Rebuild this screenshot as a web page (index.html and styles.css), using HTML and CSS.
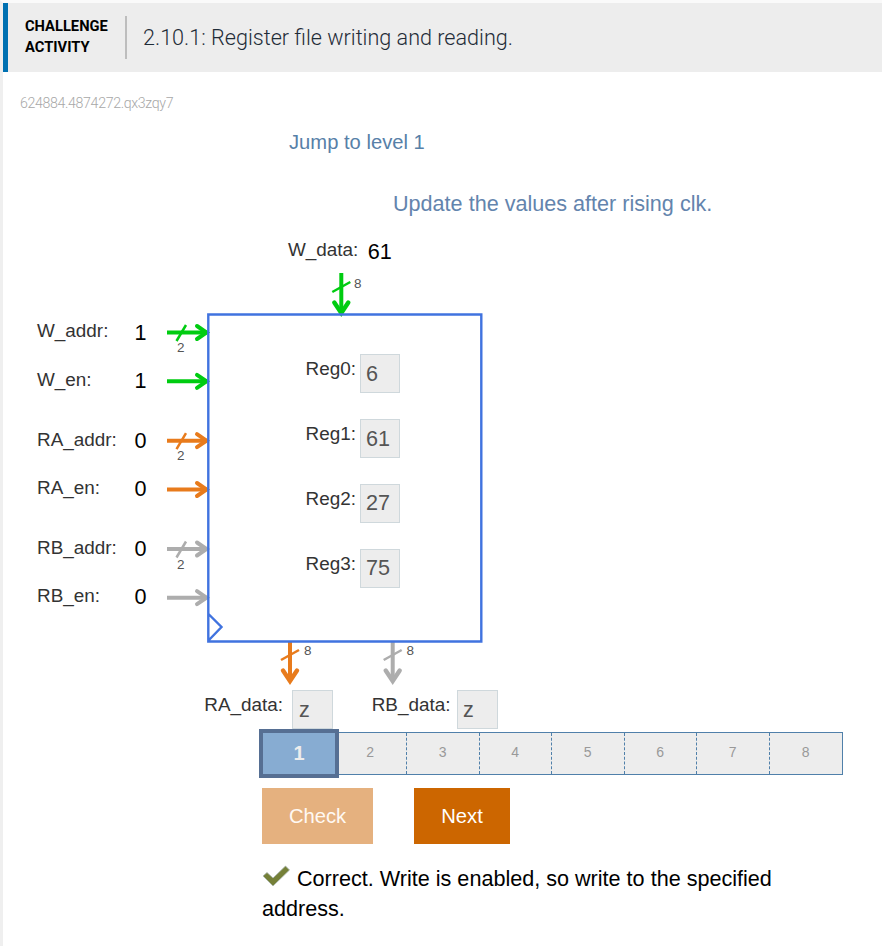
FILE: index.html
```html
<!DOCTYPE html>
<html lang="en">
<head>
<meta charset="utf-8">
<title>Register file writing and reading</title>
<link rel="stylesheet" href="styles.css">
</head>
<body>
<section class="activity">
  <header class="activity-header">
    <div class="activity-type">CHALLENGE<br>ACTIVITY</div>
    <h1 class="activity-title">2.10.1: Register file writing and reading.</h1>
  </header>
  <div class="activity-id">624884.4874272.qx3zqy7</div>
  <a class="jump">Jump to level 1</a>
  <p class="instruction">Update the values after rising clk.</p>

  <div class="diagram">
    <svg class="drawing" width="520" height="500" viewBox="0 230 520 500">
      <defs>
        <g id="arrow">
          <path d="M167 0H207" stroke-width="4"/>
          <path d="M197 -6.5L206.5 0L197 6.5" stroke-width="4" stroke-linecap="round"/>
        </g>
        <path id="slash" d="M176.5 8.5L186 -7.5" stroke-width="2.5"/>
        <g id="down">
          <path d="M0 0V39" stroke-width="4"/>
          <path d="M-7 29.5L0 40L7 29.5" stroke-width="4.4" stroke-linecap="round"/>
          <path d="M-9 19L9 9" stroke-width="2.5"/>
        </g>
      </defs>
      <g class="write"><use href="#arrow" y="332.5"/><use href="#slash" y="332.5"/><use href="#arrow" y="381.3"/><use href="#down" x="341.3" y="273"/></g>
      <g class="read-a"><use href="#arrow" y="440.7"/><use href="#slash" y="440.7"/><use href="#arrow" y="489.5"/><use href="#down" x="290" y="641"/></g>
      <g class="read-b"><use href="#arrow" y="549"/><use href="#slash" y="549"/><use href="#arrow" y="597.7"/><use href="#down" x="392.7" y="641"/></g>
      <path class="outline" d="M208.3 314.5H481.3V641.5H208.3ZM208.5 614L221.5 627L208.5 640.5"/>
      <g class="labels">
        <text x="37" y="337">W_addr:</text>
        <text x="37" y="386">W_en:</text>
        <text x="37" y="445.6">RA_addr:</text>
        <text x="37" y="494.2">RA_en:</text>
        <text x="37" y="553.6">RB_addr:</text>
        <text x="37" y="602">RB_en:</text>
        <text x="288" y="256">W_data:</text>
        <text x="305.5" y="375">Reg0:</text>
        <text x="305.5" y="440">Reg1:</text>
        <text x="305.5" y="505">Reg2:</text>
        <text x="305.5" y="570">Reg3:</text>
        <text x="204.3" y="711">RA_data:</text>
        <text x="371.7" y="711">RB_data:</text>
      </g>
      <g class="widths">
        <text x="177" y="352">2</text>
        <text x="177" y="460">2</text>
        <text x="177" y="568.5">2</text>
        <text x="354" y="287.5">8</text>
        <text x="304" y="654.5">8</text>
        <text x="406.5" y="654.5">8</text>
      </g>
      <g class="values">
        <text x="134.6" y="340">1</text>
        <text x="134.6" y="388">1</text>
        <text x="134.6" y="448">0</text>
        <text x="134.6" y="496">0</text>
        <text x="134.6" y="556">0</text>
        <text x="134.6" y="604">0</text>
        <text x="367.8" y="259">61</text>
      </g>
    </svg>
    <div class="field reg0">6</div>
    <div class="field reg1">61</div>
    <div class="field reg2">27</div>
    <div class="field reg3">75</div>
    <div class="field out-a">z</div>
    <div class="field out-b">z</div>
  </div>

  <div class="levels">
    <div class="level current">1</div>
    <div class="level">2</div>
    <div class="level">3</div>
    <div class="level">4</div>
    <div class="level">5</div>
    <div class="level">6</div>
    <div class="level">7</div>
    <div class="level">8</div>
  </div>
  <div class="actions">
    <button class="button check" disabled>Check</button>
    <button class="button next">Next</button>
  </div>
  <p class="feedback"><svg class="tick" width="28" height="22" viewBox="0 0 28 22"><path d="M1 11L5 7.5L11 13L23.5 1L27.5 5L11 21Z" fill="#758038" stroke="#a9b6b0" stroke-width=".8"/></svg>Correct. Write is enabled, so write to the specified address.</p>
</section>
</body>
</html>
```
FILE: styles.css
```css
* { box-sizing: border-box; }
body {
  margin: 0;
  height: 946px;
  overflow: hidden;
  background: #fff;
  color: #000;
  font-family: "Liberation Sans", Arial, sans-serif;
}
.activity {
  height: 946px;
  border-top: 3px solid #fafafa;
  border-left: 3px solid #efefef;
}
.activity-header {
  display: flex;
  align-items: center;
  height: 69px;
  border-left: 5px solid #0071b2;
  background: #ededed;
  font-family: Roboto, sans-serif;
}
.activity-type {
  width: 119px;
  height: 43px;
  padding-left: 17px;
  border-right: 2px solid #bdbdbd;
  font-size: 14.7px;
  font-weight: 700;
  line-height: 21px;
}
.activity-title {
  margin: 0 0 0 16px;
  color: #1f2c38;
  font-size: 21.6px;
  font-weight: 300;
}
.activity-id {
  margin: 21px 0 0 17px;
  height: 20px;
  color: #a8a8a8;
  font: 300 14.2px/20px Roboto, sans-serif;
  letter-spacing: -0.36px;
}
.jump {
  display: block;
  margin: 17px 0 0 286px;
  height: 24px;
  color: #5780a8;
  font-size: 20.2px;
  line-height: 24px;
}
.instruction {
  margin: 36px 0 0 390px;
  height: 28px;
  color: #6384ad;
  font-size: 21.6px;
  line-height: 28px;
}
.diagram {
  position: relative;
  width: 520px;
  height: 500px;
  margin: 12px 0 0 -3px;
}
.drawing { display: block; fill: none; }
.write { stroke: #0c1; }
.read-a { stroke: #e87b1c; }
.read-b { stroke: #adadad; }
.outline { stroke: #4073df; stroke-width: 2.4; }
.labels { fill: #333; font-size: 18.9px; }
.widths { fill: #555; font-size: 13.5px; }
.values { fill: #000; font-size: 21.6px; }
.field {
  position: absolute;
  left: 360px;
  width: 40px;
  height: 39px;
  padding: 1px 0 0 5px;
  border: 1px solid #cfd8dc;
  background: #ededed;
  color: #555;
  font-size: 21.6px;
  line-height: 36px;
}
.reg0 { top: 124px; }
.reg1 { top: 189px; }
.reg2 { top: 254px; }
.reg3 { top: 319px; }
.reg2, .reg3 { padding-top: 0; }
.out-a, .out-b { top: 460px; width: 41px; padding-left: 6px; }
.out-a { left: 292px; }
.out-b { left: 457px; padding-left: 5px; }
.levels {
  display: grid;
  grid-template-columns: 73.5px repeat(7, 1fr);
  width: 583px;
  height: 43px;
  margin: 2px 0 0 257px;
  border: 1px solid #5080aa;
  background: #ededed;
}
.level {
  border-right: 1px dashed #5080aa;
  color: #999;
  font-size: 14px;
  line-height: 39px;
  text-align: center;
}
.level:last-child { border-right: 0; }
.level.current {
  z-index: 1;
  margin: -4px -4.5px -4px -2px;
  border: 4px solid #566f93;
  background: #87acd2;
  color: #ededed;
  font-size: 20px;
  font-weight: 700;
  line-height: 41px;
}
.actions {
  display: flex;
  gap: 41px;
  margin: 13px 0 0 259px;
}
.button {
  height: 56px;
  padding: 0;
  border: 0;
  color: #fff;
  font: 20.2px "Liberation Sans", Arial, sans-serif;
}
.check { width: 111px; background: #e5b17f; color: #fff9f3; }
.next { width: 96px; background: #c60; }
.feedback {
  width: 530px;
  margin: 20px 0 0 259px;
  font-size: 21.6px;
  line-height: 30px;
}
.tick { position: relative; top: 1px; margin-right: 7px; }
```
